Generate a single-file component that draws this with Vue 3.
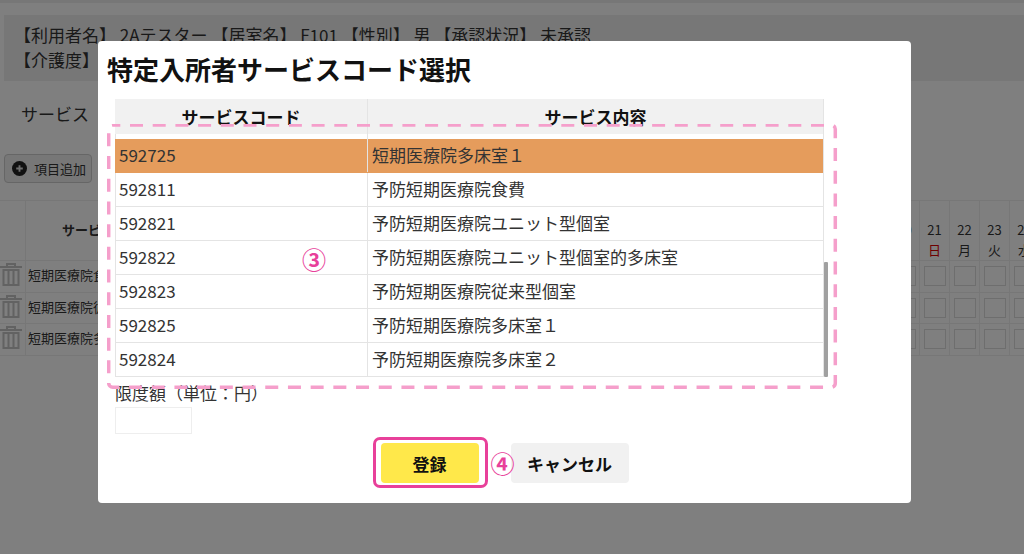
<script setup>
const days = [
  { num: 20, week: '土' },
  { num: 21, week: '日', sunday: true },
  { num: 22, week: '月' },
  { num: 23, week: '火' },
  { num: 24, week: '水' }
]

const plans = ['短期医療院食費', '短期医療院従来型個室', '短期医療院多床室']

const codes = [
  { code: '592725', name: '短期医療院多床室１', selected: true },
  { code: '592811', name: '予防短期医療院食費' },
  { code: '592821', name: '予防短期医療院ユニット型個室' },
  { code: '592822', name: '予防短期医療院ユニット型個室的多床室' },
  { code: '592823', name: '予防短期医療院従来型個室' },
  { code: '592825', name: '予防短期医療院多床室１' },
  { code: '592824', name: '予防短期医療院多床室２' }
]
</script>

<template>
  <div class="page">
    <div class="info">
      <div>【利用者名】 2Aテスター 【居室名】 F101 【性別】 男 【承認状況】 未承認</div>
      <div>【介護度】</div>
    </div>
    <div class="serviceLabel">サービス</div>
    <button class="addButton">
      <svg width="15" height="15" viewBox="0 0 16 16">
        <circle cx="8" cy="8" r="8" fill="#222" />
        <path d="M8 4.500v7M4.500 8h7" stroke="#ddd" stroke-width="2" />
      </svg>
      項目追加
    </button>

    <div class="planTable">
      <div class="planRow planHead">
        <div class="trashCell"></div>
        <div class="nameCell headName">サービス内容</div>
        <div v-for="day in days" :key="day.num" class="dayHead">
          <span>{{ day.num }}</span>
          <span :class="{ sunday: day.sunday }">{{ day.week }}</span>
        </div>
      </div>
      <div v-for="plan in plans" :key="plan" class="planRow">
        <div class="trashCell">
          <svg width="22" height="24" viewBox="0 0 22 24" fill="none" stroke="#c4c4c4" stroke-width="2">
            <path d="M0 5h22M7 5V2h8v3" />
            <path d="M3.500 8h15v15h-15zM8.500 8v15M13.500 8v15" />
          </svg>
        </div>
        <div class="nameCell">{{ plan }}</div>
        <div v-for="day in days" :key="day.num" class="dayCell"><span class="dayInput"></span></div>
      </div>
    </div>

    <div class="overlay">
      <div class="modal">
        <h2 class="modalTitle">特定入所者サービスコード選択</h2>

        <div class="codeTable">
          <div class="codeHead">
            <div class="codeCol">サービスコード</div>
            <div class="nameCol">サービス内容</div>
          </div>
          <div class="codeBody">
            <div class="codeGap"><div class="codeCol"></div></div>
            <div v-for="row in codes" :key="row.code" class="codeRow" :class="{ selected: row.selected }">
              <div class="codeCol">{{ row.code }}</div>
              <div class="nameCol">{{ row.name }}</div>
            </div>
          </div>
          <span class="scrollThumb"></span>
        </div>

        <label class="limitLabel">限度額（単位：円）</label>
        <input class="limitInput" type="text" />

        <div class="buttons">
          <button class="saveButton">
            登録
            <span class="saveFrame"></span>
            <span class="noteNumber noteFour">④</span>
          </button>
          <button class="cancelButton">キャンセル</button>
        </div>

        <span class="noteNumber noteThree">③</span>
      </div>

      <svg class="dashFrame" width="732" height="267" viewBox="0 0 732 267" fill="none">
        <rect x="1.700" y="1" width="726.600" height="262.300" rx="4" stroke="#f59fcb" stroke-width="3.500" stroke-dasharray="13 9.700" stroke-dashoffset="5.400" />
      </svg>
    </div>
  </div>
</template>

<style scoped>
.page {
  position: relative;
  width: 1024px;
  height: 554px;
  padding-top: 15px;
  box-sizing: border-box;
  overflow: hidden;
  background: #fff;
  box-shadow: inset 0 3px #eee;
  color: #333;
  font-family: "Noto Sans CJK JP", "Noto Sans", sans-serif;
  font-size: 17px;
}

.info {
  margin-left: 4px;
  height: 66px;
  padding: 7px 10px 0;
  box-sizing: border-box;
  background: #eee;
  line-height: 25px;
}

.serviceLabel {
  margin: 19px 0 0 21px;
  line-height: 28px;
}

.addButton {
  display: flex;
  align-items: center;
  gap: 7px;
  margin: 26px 0 0 4px;
  width: 88px;
  height: 29px;
  padding: 0 0 0 7px;
  background: #eee;
  border: 1px solid #ccc;
  border-radius: 4px;
  color: #333;
  font: inherit;
  font-size: 13px;
}

.planTable {
  margin-top: 17px;
  width: 1040px;
  border-top: 1px solid #eee;
}

.planRow {
  display: grid;
  grid-template-columns: 26px 864px repeat(5, 30px);
  height: 31.500px;
  border-bottom: 1px solid #eee;
  box-sizing: border-box;
}

.planRow.planHead {
  height: 60px;
}

.trashCell {
  border-right: 1px solid #eee;
  line-height: 0;
  padding-top: 1px;
}

.nameCell {
  padding-left: 2px;
  font-size: 13px;
  line-height: 28px;
  border-right: 1px solid #eee;
}

.nameCell.headName {
  padding-left: 36px;
  font-weight: 700;
  line-height: 58px;
}

.dayHead {
  display: flex;
  flex-direction: column;
  align-items: center;
  padding-top: 19px;
  font-size: 13px;
  line-height: 20px;
  border-right: 1px solid #eee;
}

.sunday {
  color: #d00;
}

.dayCell {
  display: flex;
  align-items: center;
  justify-content: center;
  border-right: 1px solid #eee;
}

.dayInput {
  width: 22px;
  height: 20px;
  box-sizing: border-box;
  border: 1px solid #ddd;
}

.overlay {
  position: absolute;
  inset: 0;
  background: rgba(0, 0, 0, 0.5);
}

.modal {
  position: absolute;
  left: 98px;
  top: 41px;
  width: 813px;
  height: 462px;
  box-sizing: border-box;
  padding: 0 17px;
  background: #fff;
  border-radius: 4px;
  display: flex;
  flex-direction: column;
}

.modalTitle {
  margin: 0 -17px;
  height: 58px;
  padding-left: 9px;
  box-sizing: border-box;
  color: #111;
  font-size: 26px;
  font-weight: 700;
  line-height: 55px;
}

.codeTable {
  position: relative;
  width: 708px;
  height: 278px;
  border-right: 1px solid #e4e4e4;
}

.codeHead {
  display: flex;
  height: 35px;
  background: #f1f1f1;
  color: #111;
  font-weight: 700;
  line-height: 36px;
  text-align: center;
}

.codeHead .codeCol,
.codeHead .nameCol {
  padding-left: 0;
}

.codeCol {
  width: 253px;
  flex: none;
  padding-left: 4px;
  box-sizing: border-box;
  border-right: 1px solid #e4e4e4;
}

.nameCol {
  flex: 1;
  padding-left: 4px;
}

.codeBody {
  height: 243px;
  box-shadow: inset 1px 0 #e4e4e4;
}

.codeGap {
  height: 5px;
}

.codeGap .codeCol {
  height: 100%;
}

.codeRow {
  display: flex;
  height: 34px;
  box-sizing: border-box;
  border-bottom: 1px solid #e4e4e4;
  line-height: 32px;
}

.codeRow.selected {
  background: #e59c5c;
  border-bottom-color: #e59c5c;
}

.scrollThumb {
  position: absolute;
  right: -5px;
  top: 163px;
  bottom: 0;
  width: 4px;
  background: #a0a0a0;
  border-radius: 1px;
}

.limitLabel {
  height: 30px;
  font-size: 17px;
  line-height: 32px;
}

.limitInput {
  width: 77px;
  height: 27px;
  padding: 0;
  box-sizing: border-box;
  border: 1px solid #eee;
  outline: none;
}

.buttons {
  display: flex;
  justify-content: center;
  gap: 32px;
  margin-top: 9px;
}

.saveButton,
.cancelButton {
  position: relative;
  height: 40px;
  padding: 0;
  border: none;
  border-radius: 4px;
  color: #111;
  font: inherit;
  font-weight: 700;
}

.saveButton {
  width: 98px;
  background: #ffe84a;
}

.cancelButton {
  width: 118px;
  background: #f1f1f1;
}

.saveFrame {
  position: absolute;
  left: -8px;
  top: -6px;
  width: 115px;
  height: 51px;
  box-sizing: border-box;
  border: 3.500px solid #e8409a;
  border-radius: 7px;
}

.noteNumber {
  position: absolute;
  z-index: 1;
  color: #e8409a;
  font-size: 24px;
  font-weight: 700;
  line-height: 30px;
}

.noteThree {
  left: 204px;
  top: 203px;
}

.noteFour {
  left: 110px;
  top: 5px;
}

.dashFrame {
  position: absolute;
  left: 107px;
  top: 124px;
}
</style>
